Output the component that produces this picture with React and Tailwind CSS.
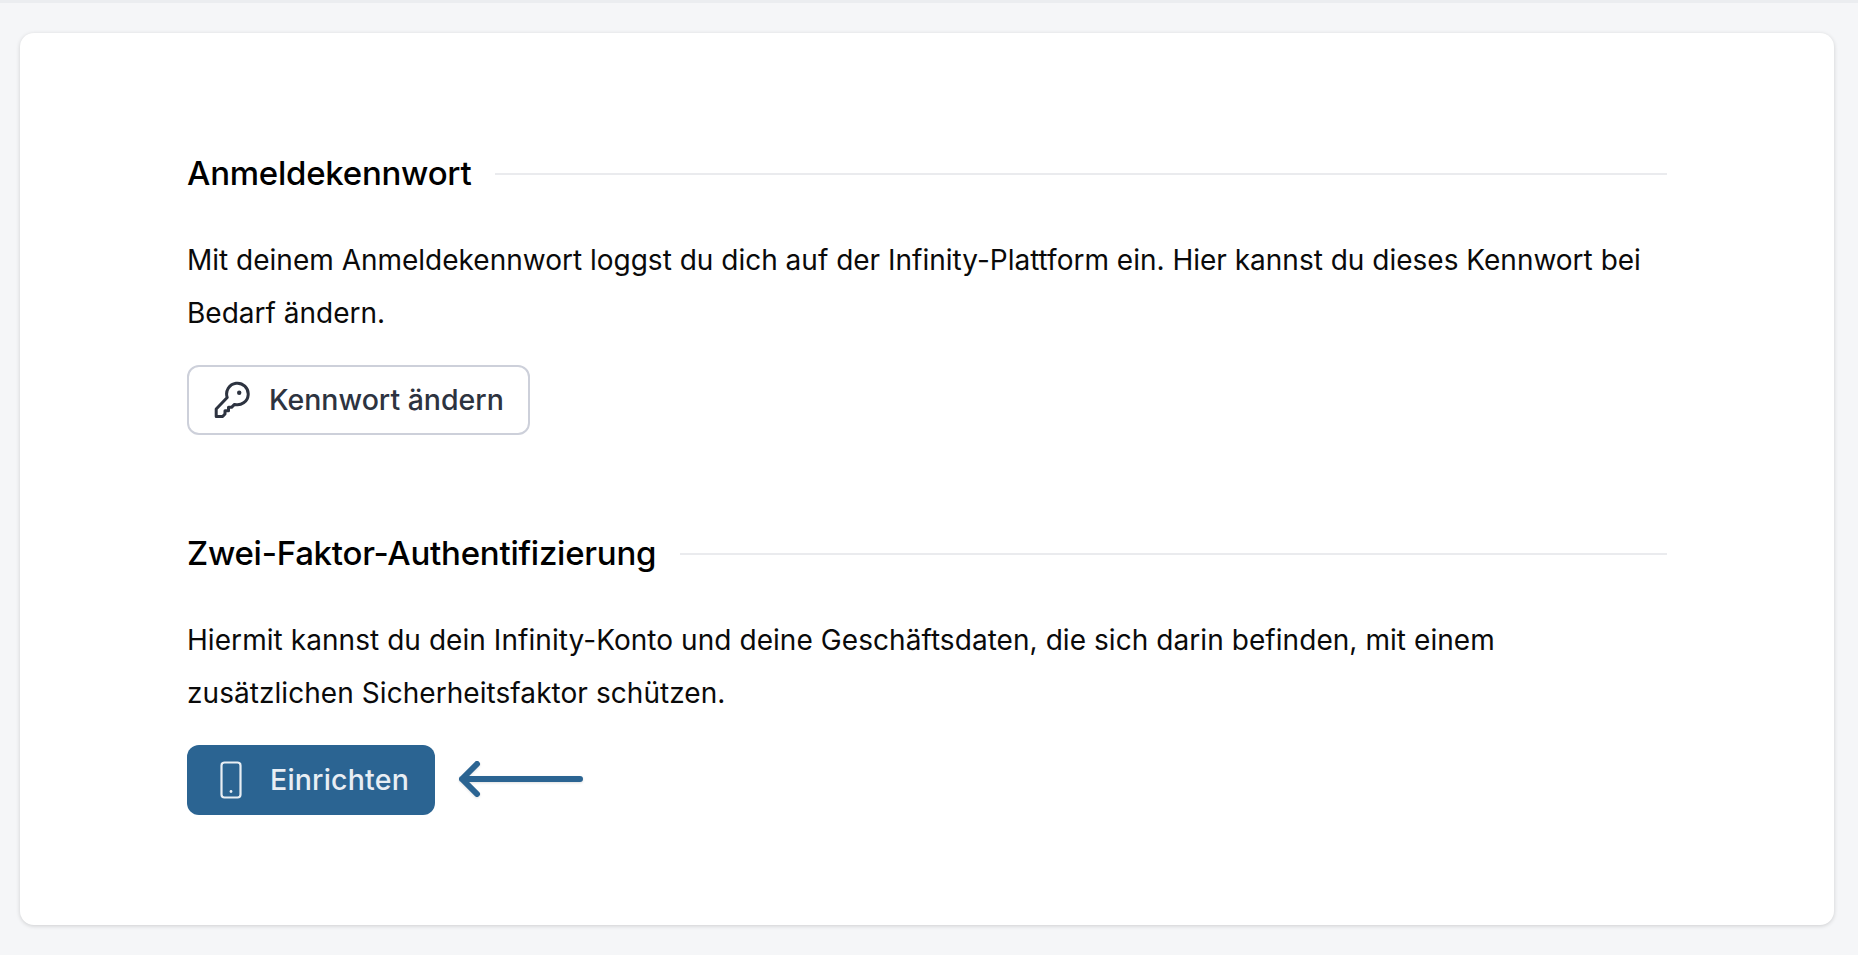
import React from 'react';

function KeyIcon() {
  return (
    <svg width="36" height="38" viewBox="0 0 36 38" fill="none" stroke="#2d3340" strokeWidth="3" strokeLinejoin="round" strokeLinecap="round" className="shrink-0">
      <path d="M13.2 16.5A10.8 10.8 0 1 1 20.5 23.4L17.5 26.3H14.5V29.8H11V33L8.6 35.5H2.2V28Z" />
      <circle cx="25.2" cy="11.8" r="2.2" fill="#2d3340" stroke="none" />
    </svg>
  );
}

function PhoneIcon() {
  return (
    <svg width="22" height="38" viewBox="0 0 22 38" fill="none" stroke="#e8eef4" strokeWidth="2.2" className="shrink-0">
      <rect x="1.5" y="1.5" width="19" height="35" rx="3" />
      <circle cx="11" cy="30.5" r="1.4" fill="#e8eef4" stroke="none" />
    </svg>
  );
}

function ArrowIcon() {
  return (
    <svg width="125" height="56" viewBox="0 0 125 56" fill="none" stroke="#2b6492" strokeWidth="6" strokeLinecap="round" strokeLinejoin="round" className="shrink-0 drop-shadow-[0_1px_1px_rgba(0,0,0,0.12)]">
      <path d="M4 27H122M19 12L4 27L19 42" />
    </svg>
  );
}

function Section({ title, children }) {
  return (
    <section>
      <div className="flex items-center gap-6 h-[40px]">
        <h2 className="text-[33px] font-medium text-black whitespace-nowrap tracking-[-0.25px]">{title}</h2>
        <div className="flex-1 h-[2px] bg-[#eaebee]" />
      </div>
      {children}
    </section>
  );
}

export default function App() {
  return (
    <div className="min-h-screen bg-[#f5f6f8] border-t-[3px] border-[#ebedf0] pt-[30px] pl-[20px] pr-[24px] pb-[30px] font-['Inter',sans-serif]">
      <div className="bg-white rounded-[14px] shadow-[0_1px_4px_rgba(0,0,0,0.16)] h-[892px] pt-[121px] px-[167px]">
        <Section title="Anmeldekennwort">
          <p className="mt-[40px] text-[28px] leading-[53px] text-[#0a0a0a]">
            Mit deinem Anmeldekennwort loggst du dich auf der Infinity-Plattform ein. Hier kannst du dieses Kennwort bei Bedarf ändern.
          </p>
          <button className="mt-[25px] h-[70px] flex items-center gap-[19px] pl-[25px] pr-[24px] rounded-[12px] border-2 border-[#cdd0da] bg-white text-[28.5px] font-medium text-[#2d3340]">
            <KeyIcon />
            Kennwort ändern
          </button>
        </Section>
        <div className="mt-[99px]">
          <Section title="Zwei-Faktor-Authentifizierung">
            <p className="mt-[40px] text-[28px] leading-[53px] text-[#0a0a0a] tracking-[0.06px]">
              Hiermit kannst du dein Infinity-Konto und deine Geschäftsdaten, die sich darin befinden, mit einem
              <br />
              zusätzlichen Sicherheitsfaktor schützen.
            </p>
            <div className="mt-[25px] flex items-center gap-[23px]">
              <button className="h-[70px] flex items-center gap-[28px] pl-[33px] pr-[26px] rounded-[12px] bg-[#2b6492] text-[28.5px] tracking-[0.2px] font-medium text-[#e8eef4]">
                <PhoneIcon />
                Einrichten
              </button>
              <ArrowIcon />
            </div>
          </Section>
        </div>
      </div>
    </div>
  );
}
